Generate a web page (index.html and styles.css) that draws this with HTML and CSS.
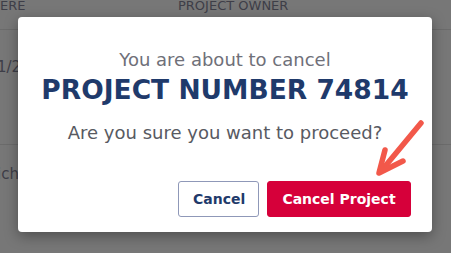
FILE: index.html
```html
<!DOCTYPE html>
<html>
<head>
<meta charset="utf-8">
<link rel="stylesheet" href="styles.css">
</head>
<body>
<div class="page">
  <div class="table">
    <div class="thead">
      <span class="th th-a">ERE</span>
      <span class="th th-b">PROJECT OWNER</span>
    </div>
    <div class="row row-1"><span class="cell">1/2</span></div>
    <div class="row row-2"><span class="cell">ich</span><span class="cell cell-low">5</span></div>
  </div>
  <div class="modal">
    <p class="lead">You are about to cancel</p>
    <h1 class="title">PROJECT NUMBER 74814</h1>
    <p class="question">Are you sure you want to proceed?</p>
    <div class="actions">
      <button class="btn btn-outline">Cancel</button>
      <button class="btn btn-danger">Cancel Project</button>
    </div>
  </div>
  <svg class="arrow" width="70" height="70" viewBox="0 0 70 70">
    <path d="M61 13 L22 60" stroke="#f2584a" stroke-width="5.5" stroke-linecap="round" fill="none"/>
    <path d="M25 40 L19 63 L43 51" stroke="#f2584a" stroke-width="5.5" stroke-linecap="round" stroke-linejoin="round" fill="none"/>
  </svg>
</div>
</body>
</html>
```
FILE: styles.css
```css
html, body {
  margin: 0;
  padding: 0;
}
body {
  width: 451px;
  height: 253px;
  overflow: hidden;
  font-family: "DejaVu Sans", "Noto Sans", sans-serif;
}
.page {
  position: relative;
  width: 451px;
  height: 253px;
  background: #777777;
}
.table {
  display: flex;
  flex-direction: column;
  color: #3e3e48;
}
.thead {
  height: 29px;
  border-bottom: 1px solid #6b6b6b;
  display: flex;
  align-items: flex-start;
  font-size: 13px;
  line-height: 12px;
}
.th-a { width: 178px; }
.row {
  border-bottom: 1px solid #6b6b6b;
  font-size: 15px;
  display: flex;
  flex-direction: column;
}
.row-1 { height: 115px; padding-top: 28px; box-sizing: border-box; }
.row-2 { height: 108px; padding-top: 20px; box-sizing: border-box; border-bottom: none; }
.cell { margin-left: -3px; }
.cell-low { margin-top: 45px; margin-left: -9px; }
.modal {
  position: absolute;
  left: 18px;
  top: 17px;
  width: 414px;
  height: 215px;
  box-sizing: border-box;
  background: #ffffff;
  border-radius: 4px;
  box-shadow: 0 4px 14px rgba(0,0,0,0.35);
  display: flex;
  flex-direction: column;
  align-items: center;
  padding: 31px 21px 15px 21px;
}
.lead {
  margin: 0;
  font-size: 18px;
  line-height: 24px;
  color: #6f7079;
  white-space: nowrap;
}
.title {
  margin: 2px 0 0 0;
  font-size: 26.5px;
  line-height: 32px;
  font-weight: 800;
  color: #1f3a6b;
  white-space: nowrap;
}
.question {
  margin: 15px 0 0 0;
  font-size: 18px;
  line-height: 24px;
  color: #585a62;
  white-space: nowrap;
}
.actions {
  margin-top: auto;
  align-self: flex-end;
  display: flex;
  gap: 8px;
}
.btn {
  font-family: inherit;
  font-size: 14px;
  font-weight: 700;
  height: 36px;
  border-radius: 3px;
  padding: 0 14px;
  cursor: pointer;
}
.btn-outline {
  background: #ffffff;
  border: 1px solid #8f98b8;
  color: #1f3a6b;
  width: 81px;
}
.btn-danger {
  background: #d6003a;
  border: 1px solid #d6003a;
  color: #ffffff;
  width: 144px;
}
.arrow {
  position: absolute;
  left: 360px;
  top: 110px;
}
```
